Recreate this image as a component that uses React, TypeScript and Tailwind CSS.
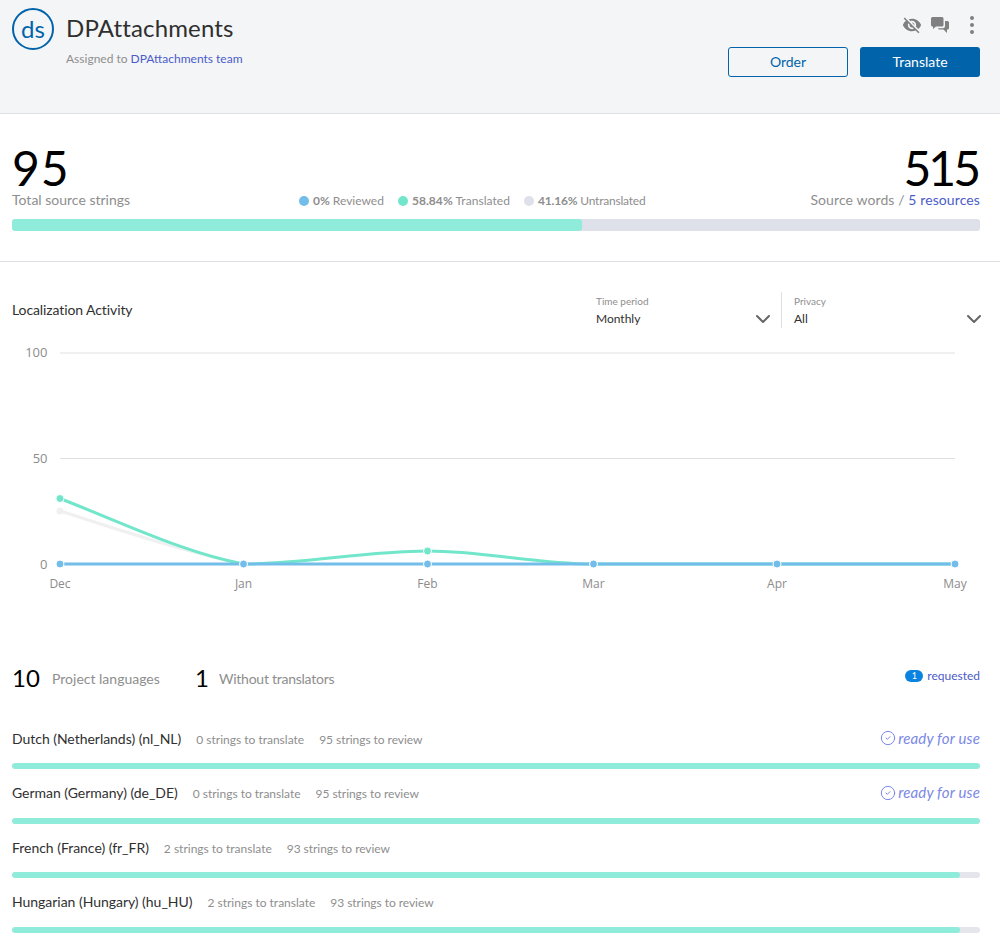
import { ChevronDown, CircleCheck } from 'lucide-react';
import { MdVisibilityOff } from 'react-icons/md';

const languages = [
  { name: 'Dutch (Netherlands) (nl_NL)', translate: 0, review: 95, pct: 100, ready: true },
  { name: 'German (Germany) (de_DE)', translate: 0, review: 95, pct: 100, ready: true },
  { name: 'French (France) (fr_FR)', translate: 2, review: 93, pct: 97.9, ready: false },
  { name: 'Hungarian (Hungary) (hu_HU)', translate: 2, review: 93, pct: 97.9, ready: false },
];

const months = [
  { label: 'Dec', x: 60 },
  { label: 'Jan', x: 243.5 },
  { label: 'Feb', x: 427.5 },
  { label: 'Mar', x: 593.5 },
  { label: 'Apr', x: 777 },
  { label: 'May', x: 955 },
];

function Chart() {
  return (
    <svg width="1000" height="262" viewBox="0 340 1000 262" className="block" style={{ fontFamily: '"Open Sans", sans-serif' }}>
      {[
        { label: '100', y: 353 },
        { label: '50', y: 458.5 },
      ].map((t) => (
        <g key={t.label}>
          <line x1="60" x2="955" y1={t.y} y2={t.y} stroke="#e0e0e0" strokeWidth="1" />
          <text x="47.5" y={t.y + 4} textAnchor="end" fontSize="13" fill="#8c8c8c">{t.label}</text>
        </g>
      ))}
      <text x="47.5" y="568.5" textAnchor="end" fontSize="13" fill="#8c8c8c">0</text>
      {/* pale line */}
      <path d="M60 511 C120 530 185 552 243.5 564" fill="none" stroke="#f0f0f0" strokeWidth="3" />
      <circle cx="60" cy="511" r="3.5" fill="#f0f0f0" />
      {/* translated */}
      <path d="M60 498.5 C125 524 185 553 243.5 564 C305 564 365 551 427.5 551 C485 551 535 564 593.5 564 L955 564" fill="none" stroke="#71e6ca" strokeWidth="3" />
      <circle cx="60" cy="498.5" r="4" fill="#71e6ca" stroke="#fff" strokeWidth="1" />
      <circle cx="427.5" cy="551" r="4" fill="#71e6ca" stroke="#fff" strokeWidth="1" />
      {/* reviewed */}
      <line x1="60" x2="955" y1="564" y2="564" stroke="#72bde9" strokeWidth="3" />
      {months.map((m) => (
        <g key={m.label}>
          <circle cx={m.x} cy="564" r="4" fill="#72bde9" stroke="#fff" strokeWidth="1" />
          <text x={m.x} y="588" textAnchor="middle" fontSize="12" fill="#8c8c8c">{m.label}</text>
        </g>
      ))}
    </svg>
  );
}

function Legend({ color, value, label, className }: { color: string; value: string; label: string; className?: string }) {
  return (
    <div className="flex items-center gap-[4px]">
      <span className={`w-[10px] h-[10px] rounded-full ${color}`}></span>
      <span className={`text-[12px] text-[#8e8e8e] ${className ?? ''}`}><b className="font-bold">{value}</b> {label}</span>
    </div>
  );
}

function Select({ label, value, className }: { label: string; value: string; className: string }) {
  return (
    <div className={`flex items-center justify-between h-[36px] ${className}`}>
      <div>
        <p className="text-[10px] leading-[12px] text-[#8e8e8e] mb-[5px]">{label}</p>
        <p className="text-[12px] leading-[14px] text-[#303030]">{value}</p>
      </div>
      <ChevronDown size={24} strokeWidth={2} className="text-[#666] self-end mb-[-3px]" />
    </div>
  );
}

export default function App() {
  return (
    <div className="h-[948px] w-full overflow-hidden bg-white text-[#303030]" style={{ fontFamily: 'Lato, sans-serif' }}>
      {/* Header */}
      <header className="h-[114px] bg-[#f4f5f7] border-b border-[#dfe0e6] flex justify-between pl-[12px] pr-[20px]">
        <div className="flex items-start gap-[12px] pt-[8px]">
          <div className="w-[42px] h-[42px] rounded-full border-2 border-[#0164aa] text-[#0164aa] flex items-center justify-center text-[24px] leading-none">ds</div>
          <div>
            <h1 className="text-[24px] leading-[28px] mt-[6px] text-[#2f2f2f] tracking-[0.15px]">DPAttachments</h1>
            <p className="text-[12px] leading-[14px] mt-[10px] text-[#8e8e8e]">
              Assigned to <a className="text-[#4a5cc7]">DPAttachments team</a>
            </p>
          </div>
        </div>
        <div className="flex flex-col items-end pt-[14px]">
          <div className="flex items-center h-[22px] gap-[9px] mr-[6px]">
            <MdVisibilityOff size={20} className="text-[#808080]" />
            <svg width="18" height="16" viewBox="0 0 18 16" className="text-[#808080]">
              <path fill="currentColor" d="M1.5 0H11a1.5 1.5 0 0 1 1.5 1.5V8A1.5 1.5 0 0 1 11 9.5H5L2 12V9.5H1.5A1.5 1.5 0 0 1 0 8V1.5A1.5 1.5 0 0 1 1.5 0z" />
              <path fill="currentColor" d="M14 4h2.5A1.5 1.5 0 0 1 18 5.500V11a1.500 1.500 0 0 1-1.500 1.500H16V16l-3.500-3.500H8.500a1.500 1.500 0 0 1-1.500-1.300H11.500A2.500 2.500 0 0 0 14 8.700z" />
            </svg>
            <svg width="4" height="18" viewBox="0 0 4 18" className="text-[#808080] ml-[12px]">
              <circle cx="2" cy="2" r="2" fill="currentColor" />
              <circle cx="2" cy="9" r="2" fill="currentColor" />
              <circle cx="2" cy="16" r="2" fill="currentColor" />
            </svg>
          </div>
          <div className="flex gap-[12px] mt-[11px]">
            <button className="w-[120px] h-[30px] pb-[2px] rounded-[3px] border border-[#0164aa] text-[#0164aa] text-[14px]">Order</button>
            <button className="w-[120px] h-[30px] pb-[2px] rounded-[3px] bg-[#0164aa] text-white text-[14px]">Translate</button>
          </div>
        </div>
      </header>

      {/* Totals */}
      <section className="h-[148px] border-b border-[#dfe0e6] pl-[12px] pr-[20px] pt-[30px]">
        <div className="flex justify-between items-end h-[64px]">
          <div>
            <p className="text-[48px] leading-[48px] text-black tracking-[1px]">95</p>
            <p className="text-[14px] leading-[16px] text-[#8e8e8e]">Total source strings</p>
          </div>
          <div className="flex gap-[14px] mb-[-2px] ml-[4px]">
            <Legend color="bg-[#72bde9]" value="0%" label="Reviewed" />
            <Legend color="bg-[#71e6ca]" value="58.84%" label="Translated" className="tracking-[0.05px]" />
            <Legend color="bg-[#dfe1ea]" value="41.16%" label="Untranslated" className="tracking-[-0.2px]" />
          </div>
          <div className="text-right">
            <p className="text-[48px] leading-[48px] text-black tracking-[-3px] pr-[2px]">515</p>
            <p className="text-[14px] leading-[16px] text-[#8e8e8e] tracking-[0.1px]">
              Source words / <a className="text-[#4a5cc7]">5 resources</a>
            </p>
          </div>
        </div>
        <div className="mt-[11px] h-[12px] rounded-[3px] bg-[#dfe1ea] overflow-hidden">
          <div className="h-full bg-[#8fecdb] rounded-[3px] w-[58.84%]"></div>
        </div>
      </section>

      {/* Activity */}
      <section className="pt-[30px]">
        <div className="flex items-start justify-between pl-[12px] pr-[14px]">
          <h2 className="text-[14px] leading-[36px] text-[#303030] tracking-[-0.1px]">Localization Activity</h2>
          <div className="flex">
            <Select label="Time period" value="Monthly" className="w-[179px]" />
            <div className="w-px h-[36px] bg-[#dfe0e6] ml-[6px]"></div>
            <Select label="Privacy" value="All" className="w-[204px] pl-[12px]" />
          </div>
        </div>
        <div className="mt-[12px]">
          <Chart />
        </div>
      </section>

      {/* Languages */}
      <section className="pl-[12px] pr-[20px] mt-[62px]">
        <div className="flex items-center justify-between h-[28px]">
          <div className="flex items-center">
            <span className="text-[24px] text-black w-[40px]">10</span>
            <span className="text-[14px] text-[#8e8e8e] w-[143px]">Project languages</span>
            <span className="text-[24px] text-black w-[24px]">1</span>
            <span className="text-[14px] text-[#8e8e8e] tracking-[-0.25px]">Without translators</span>
          </div>
          <div className="flex items-center gap-[4px] text-[12px] text-[#4a5cc7] mt-[-4px]">
            <span className="w-[18px] h-[12px] rounded-full bg-[#0a84e0] text-white text-[9px] leading-[12px] text-center">1</span>
            requested
          </div>
        </div>
        <div className="mt-[32px]">
          {languages.map((l) => (
            <div key={l.name} className="h-[54.5px]">
              <div className="flex items-center justify-between h-[28px]">
                <div className="flex items-baseline">
                  <span className="text-[14px] text-[#303030] tracking-[-0.03px]">{l.name}</span>
                  <span className="text-[12px] text-[#8e8e8e] ml-[15px]">{l.translate} strings to translate</span>
                  <span className="text-[12px] text-[#8e8e8e] ml-[15px] tracking-[-0.05px]">{l.review} strings to review</span>
                </div>
                {l.ready && (
                  <div className="flex items-center gap-[2px] text-[15px] italic text-[#7b88e6] tracking-[0.15px]">
                    <CircleCheck size={16} strokeWidth={1.5} />
                    ready for use
                  </div>
                )}
              </div>
              <div className="mt-[11px] h-[6px] rounded-[3px] bg-[#e4e6ec] overflow-hidden">
                <div className="h-full bg-[#8fecdb] rounded-[3px]" style={{ width: `${l.pct}%` }}></div>
              </div>
            </div>
          ))}
        </div>
      </section>
    </div>
  );
}
